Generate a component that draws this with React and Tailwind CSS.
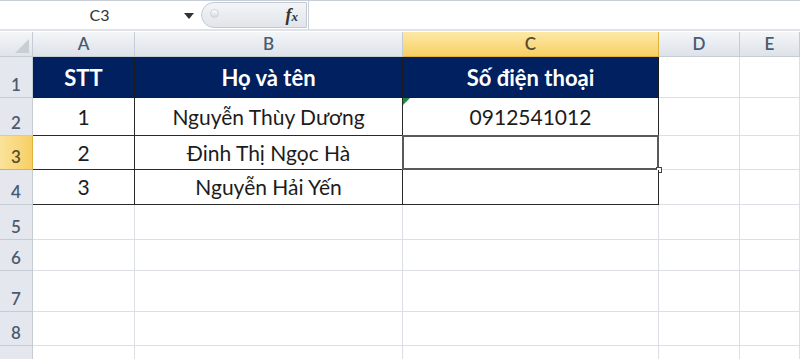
import React from 'react';

// kích thước cột và hàng lấy theo ảnh
const cols = ['A', 'B', 'C', 'D', 'E'];
const rowHeights = [41, 38, 34, 35, 35, 31, 41, 34, 20];

const data = {
  1: ['STT', 'Họ và tên', 'Số điện thoại'],
  2: ['1', 'Nguyễn Thùy Dương', '0912541012'],
  3: ['2', 'Đinh Thị Ngọc Hà', ''],
  4: ['3', 'Nguyễn Hải Yến', ''],
};

function FormulaBar() {
  return (
    <div className="h-[31px] flex border-t border-[#c9cfd6] border-b-2 border-b-[#dfe3e8] bg-white">
      <div className="w-[201px] flex items-center relative">
        <span className="flex-1 text-center text-[16px] text-[#333] pr-[2px]">C3</span>
        <svg width="10" height="6" viewBox="0 0 10 6" className="absolute left-[184px] top-[12px]">
          <path d="M0 0 L10 0 L5 6 Z" fill="#333" />
        </svg>
      </div>
      <div className="w-[106px] my-[1px] rounded-l-full border border-[#c3cad3] bg-gradient-to-b from-[#f3f5f7] to-[#e1e5ea] relative flex items-center justify-end pr-[8px]">
        <span className="absolute left-[8px] top-[6px] w-[9px] h-[9px] rounded-full bg-gradient-to-b from-[#ffffff] to-[#d3d8de] border border-[#cdd3da]" />
        <span className="font-['Liberation_Serif',serif] italic font-bold text-[18px] text-[#333] leading-none">
          f<span className="text-[13px]">x</span>
        </span>
      </div>
      <div className="flex-1 border-l border-[#c9cfd6] ml-[1px]" />
    </div>
  );
}

export default function App() {
  return (
    <div className="w-[800px] h-[359px] overflow-hidden bg-white font-['Lato','Noto_Sans',sans-serif]">
      <FormulaBar />

      <div className="grid grid-cols-[33px_102px_268px_256px_81px_1fr] grid-rows-[25px_41px_38px_34px_35px_35px_31px_41px_34px_20px] mt-[1px]">
        {/* hàng tiêu đề cột */}
        <div className="bg-gradient-to-b from-[#f4f6f8] to-[#dfe4ea] border-r border-b border-[#c6ccd4] relative">
          <svg width="14" height="14" viewBox="0 0 14 14" className="absolute right-[3px] bottom-[3px]">
            <path d="M14 0 L14 14 L0 14 Z" fill="#c9ced5" />
          </svg>
        </div>
        {cols.map((c) => (
          <div
            key={c}
            className={
              c === 'C'
                ? 'bg-gradient-to-b from-[#fde9a6] to-[#f7cf62] border-r border-b border-[#e2b13c] flex items-center justify-center text-[17px] font-semibold text-[#5a4a2a]'
                : 'bg-gradient-to-b from-[#f4f6f8] to-[#dde2e9] border-r border-b border-[#c6ccd4] flex items-center justify-center text-[17px] font-semibold text-[#4b5a6e]'
            }
          >
            {c}
          </div>
        ))}

        {rowHeights.map((h, i) => {
          const r = i + 1;
          const inTable = r <= 4;
          return (
            <React.Fragment key={r}>
              <div
                className={
                  r === 3
                    ? 'bg-gradient-to-r from-[#fbe39a] to-[#f7cf62] border-r border-b border-[#e2b13c] flex items-end justify-center text-[17px] font-semibold text-[#5a4a2a]'
                    : 'bg-[#e4e8ee] border-r border-b border-[#c6ccd4] flex items-end justify-center text-[17px] font-semibold text-[#4b5a6e]'
                }
              >
                {r <= 8 ? r : ''}
              </div>
              {cols.map((c, ci) => {
                const text = inTable && ci < 3 ? data[r][ci] : '';
                if (inTable && ci < 3) {
                  const header = r === 1;
                  return (
                    <div
                      key={c}
                      className={
                        header
                          ? 'bg-[#002060] border-r border-b border-[#1b1b1b] flex items-center justify-center text-white font-bold text-[22px]'
                          : 'bg-white border-r border-b border-[#2a2a2a] flex items-center justify-center text-[#1c1c1c] text-[21px] relative'
                      }
                    >
                      {text}
                      {r === 2 && c === 'C' && (
                        <svg width="7" height="7" viewBox="0 0 7 7" className="absolute left-0 top-0">
                          <path d="M0 0 L7 0 L0 7 Z" fill="#1e8a3a" />
                        </svg>
                      )}
                      {r === 3 && c === 'C' && (
                        <>
                          <span className="absolute -left-[1px] -top-[1px] -right-[1px] -bottom-[1px] border-2 border-[#5a5a5a]" />
                          <span className="absolute -right-[4px] -bottom-[4px] w-[6px] h-[6px] bg-white border border-[#444]" />
                        </>
                      )}
                    </div>
                  );
                }
                return <div key={c} className="border-r border-b border-[#dcdfe3]" />;
              })}
            </React.Fragment>
          );
        })}
      </div>
    </div>
  );
}
